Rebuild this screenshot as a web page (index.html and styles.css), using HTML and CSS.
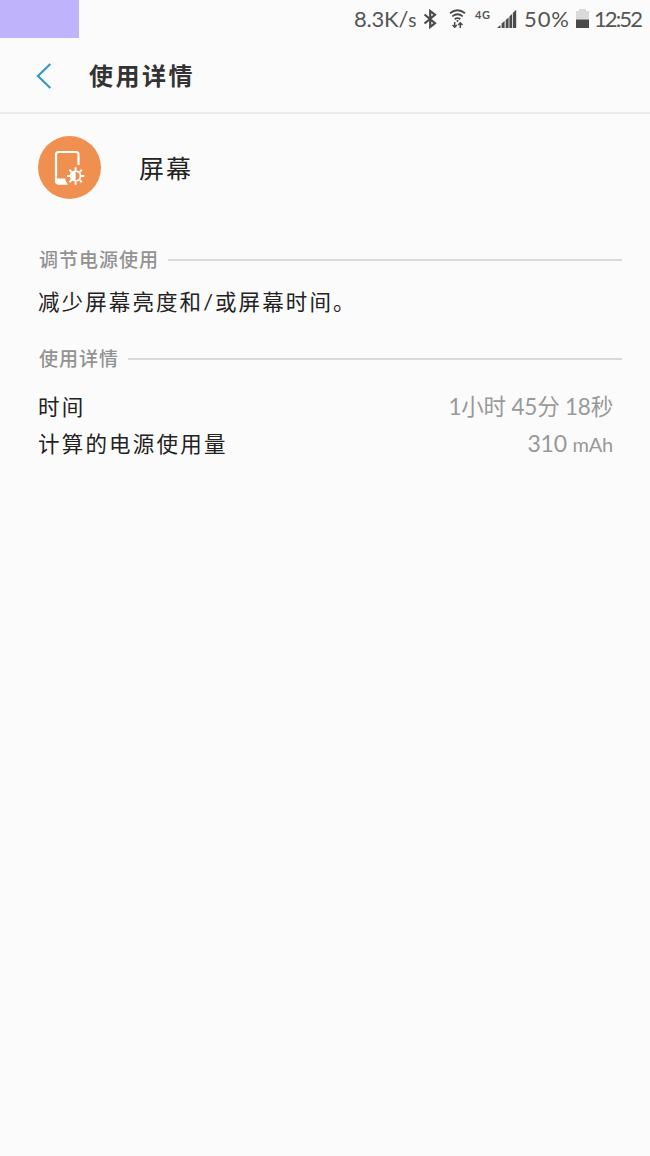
FILE: index.html
```html
<!DOCTYPE html>
<html lang="zh-CN">
<head>
    <meta charset="UTF-8">
    <meta name="viewport" content="width=device-width, initial-scale=1.0">
    <title>使用详情</title>
    <link rel="stylesheet" href="styles.css">
</head>
<body>
    <div class="status-bar">
        <div class="status-block"></div>
        <div class="status-items">
            <span class="speed">8.3K/<span class="unit">s</span></span>
            <svg class="bluetooth" width="14" height="20" viewBox="0 0 14 20" fill="none" stroke="#4a4a4a" stroke-width="2.2">
                <path d="M1.5 5.5L12 14.2L7.2 18V2L12 5.8L1.5 14.5"/>
            </svg>
            <svg class="wifi" width="17" height="20" viewBox="0 0 17 20" fill="none" stroke="#4a4a4a" stroke-width="1.8">
                <path d="M1 4.3Q8.5 -1.7 16 4.3M3.3 7.4Q8.5 3.2 13.7 7.4M5.7 10.2Q8.5 8.1 11.3 10.2"/>
                <circle cx="8.5" cy="12" r="1" fill="#4a4a4a" stroke="none"/>
                <path d="M5.7 13V18M3.5 16L5.7 18.2L7.9 16M11.3 19V14M9.1 16L11.3 13.8L13.5 16" stroke-width="1.5"/>
            </svg>
            <span class="network">4G</span>
            <svg class="signal" width="20" height="20" viewBox="0 0 20 20" fill="#4a4a4a">
                <path d="M0 19L3.5 16V19ZM4.6 14.6L7.6 12V19H4.6ZM8.7 11L11.6 8.4V19H8.7ZM12.4 7.6L15 5V19H12.4ZM15.8 4L19.2 .8V19H15.8Z"/>
            </svg>
            <span class="percent">50%</span>
            <svg class="battery" width="13" height="20" viewBox="0 0 13 20">
                <path d="M0 2H3V0H10V2H13V10.5H0Z" fill="#dadada"/>
                <path d="M0 10.5H13V19H0Z" fill="#4a4a4a"/>
            </svg>
            <span class="clock">12:52</span>
        </div>
    </div>

    <header>
        <svg class="back" width="16" height="26" viewBox="0 0 16 26" fill="none" stroke="#3c9abf" stroke-width="2.3">
            <path d="M14.3 1L2 13L14.3 25"/>
        </svg>
        <h1>使用详情</h1>
    </header>

    <main>
        <div class="app">
            <svg class="app-icon" width="64" height="64" viewBox="0 0 64 64">
                <circle cx="31.5" cy="31.5" r="31.5" fill="#ef9050"/>
                <path d="M40.5 29V18.5Q40.5 16 38 16H20.5Q18 16 18 18.5V45Q18 47.3 20.5 47.3H29" fill="none" stroke="#fff" stroke-width="2.2"/>
                <path d="M18 42.5H27Q27.5 46 30 48.4H20Q18 48 17 46Z" fill="#fff"/>
                <g transform="translate(37.6 40)">
                    <circle r="4.9" fill="none" stroke="#fff" stroke-width="1.8"/>
                    <path d="M0 -5A5 5 0 0 0 0 5Z" fill="#fff"/>
                    <path d="M0 -5.5V-8.7M0 5.5V8.7M-5.5 0H-8.7M5.5 0H8.7M-3.9 -3.9L-6.2 -6.2M3.9 -3.9L6.2 -6.2M-3.9 3.9L-6.2 6.2M3.9 3.9L6.2 6.2" stroke="#fff" stroke-width="2"/>
                </g>
            </svg>
            <span class="app-name">屏幕</span>
        </div>

        <section>
            <h2>调节电源使用</h2>
            <p class="tip">减少屏幕亮度和/或屏幕时间。</p>
        </section>

        <section>
            <h2>使用详情</h2>
            <dl>
                <div class="row">
                    <dt>时间</dt>
                    <dd class="time">1小时 45分 18秒</dd>
                </div>
                <div class="row">
                    <dt>计算的电源使用量</dt>
                    <dd class="power">310 <span class="unit">mAh</span></dd>
                </div>
            </dl>
        </section>
    </main>
</body>
</html>
```
FILE: styles.css
```css
* {
    box-sizing: border-box;
}

body {
    margin: 0;
    min-height: 1156px;
    background-color: #fbfbfb;
    color: #222;
    font-family: Lato, "Noto Sans CJK SC", sans-serif;
}

.status-bar {
    display: flex;
    justify-content: space-between;
    height: 38px;
    color: #555;
    font-size: 22px;
    line-height: 38px;
    white-space: nowrap;
}

.status-block {
    width: 79px;
    background-color: #bfb3fb;
}

.status-items {
    display: flex;
    align-items: center;
    width: 296px;
}

.status-items svg {
    flex: none;
}

.speed {
    width: 69px;
    letter-spacing: -0.2px;
}

.speed .unit {
    font-size: 19px;
}

.bluetooth {
    margin-right: 12px;
}

.wifi {
    margin-right: 9px;
}

.network {
    width: 22px;
    font-size: 11px;
    font-weight: bold;
    line-height: 30px;
    align-self: flex-start;
    letter-spacing: 0.5px;
}

.signal {
    margin-right: 7px;
}

.percent {
    width: 52px;
    letter-spacing: 0.9px;
}

.battery {
    margin-right: 5px;
}

.clock {
    letter-spacing: -1.9px;
}

header {
    display: flex;
    align-items: center;
    height: 76px;
    padding-left: 36px;
    border-bottom: 2px solid #ebebeb;
}

.back {
    margin-top: 2px;
    margin-right: 37px;
}

h1 {
    margin: 2px 0 0;
    color: #333;
    font-size: 24px;
    font-weight: 700;
    letter-spacing: 2.5px;
    line-height: 36px;
}

main {
    padding: 22px 28px 0 38px;
}

.app {
    display: flex;
    align-items: center;
    height: 64px;
    margin-bottom: 45px;
}

.app-name {
    margin-left: 37px;
    padding-bottom: 3px;
    font-size: 25px;
    letter-spacing: 2px;
}

h2 {
    display: flex;
    align-items: center;
    height: 30px;
    margin: 0;
    padding-left: 1px;
    color: #929292;
    font-size: 19px;
    font-weight: 500;
    letter-spacing: 1px;
    line-height: 28px;
}

h2::after {
    content: "";
    flex: 1;
    height: 2px;
    margin-left: 9px;
    background-color: #dadada;
}

.tip {
    height: 69px;
    margin: 0;
    padding-top: 9px;
    font-size: 21.5px;
    letter-spacing: 2.1px;
    line-height: 37px;
}

dl {
    margin: 15px 0 0;
}

.row {
    display: flex;
    justify-content: space-between;
    height: 37px;
    padding-right: 9px;
    font-size: 21.5px;
    line-height: 37px;
}

dt {
    letter-spacing: 2.2px;
}

dd {
    margin: 0;
    color: #999;
    font-size: 23px;
    line-height: 35px;
}

.time {
    font-size: 22.5px;
    letter-spacing: -0.2px;
}

.power {
    letter-spacing: -0.2px;
}

.power .unit {
    font-size: 20px;
}
```
